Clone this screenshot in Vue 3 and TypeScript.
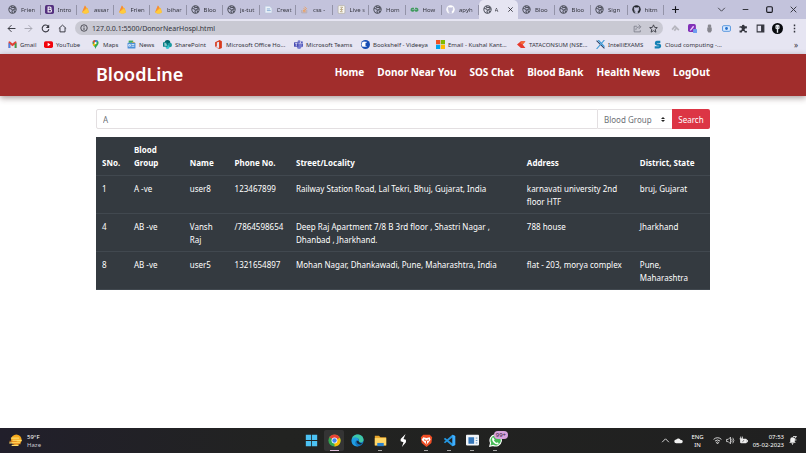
<script setup lang="ts">
import { ref } from 'vue'

interface Tab { icon: string; title: string; active?: boolean }
interface Bookmark { icon: string; label: string }
interface Donor {
  sno: number
  group: string
  name: string
  phone: string
  street: string
  address: string
  district: string
}

const tabs: Tab[] = [
  { icon: 'globe', title: 'Frien' },
  { icon: 'bootstrap', title: 'Intro' },
  { icon: 'flame', title: 'assar' },
  { icon: 'flame', title: 'Frien' },
  { icon: 'flame', title: 'bihar' },
  { icon: 'globe', title: 'Bloo' },
  { icon: 'globe', title: 'js-tut' },
  { icon: 'page', title: 'Creat' },
  { icon: 'stack', title: 'css -' },
  { icon: 'doc', title: 'Live s' },
  { icon: 'globe', title: 'Hom' },
  { icon: 'geeks', title: 'How' },
  { icon: 'github-light', title: 'apyh' },
  { icon: 'globe', title: 'A', active: true },
  { icon: 'globe', title: 'Bloo' },
  { icon: 'globe', title: 'Bloo' },
  { icon: 'globe', title: 'Sign' },
  { icon: 'github', title: 'hitm' },
]

const bookmarks: Bookmark[] = [
  { icon: 'gmail', label: 'Gmail' },
  { icon: 'youtube', label: 'YouTube' },
  { icon: 'maps', label: 'Maps' },
  { icon: 'news', label: 'News' },
  { icon: 'sharepoint', label: 'SharePoint' },
  { icon: 'office', label: 'Microsoft Office Ho...' },
  { icon: 'teams', label: 'Microsoft Teams' },
  { icon: 'bookshelf', label: 'Bookshelf - Videeya' },
  { icon: 'microsoft', label: 'Email - Kushal Kant...' },
  { icon: 'tata', label: 'TATACONSUM (NSE...' },
  { icon: 'exams', label: 'IntelliEXAMS' },
  { icon: 'cloud-s', label: 'Cloud computing -...' },
]

const extensions = ['recycle', 'purple', 'mic', 'camera', 'puzzle', 'panel', 'avatar', 'dots']
const links = ['Home', 'Donor Near You', 'SOS Chat', 'Blood Bank', 'Health News', 'LogOut']
const columns = ['SNo.', 'Blood Group', 'Name', 'Phone No.', 'Street/Locality', 'Address', 'District, State']
const apps = ['windows', 'chrome', 'edge', 'folder', 'bolt', 'brave', 'vscode', 'window-app', 'whatsapp']
const running = ['chrome', 'folder', 'brave', 'vscode', 'window-app', 'whatsapp']

const donors: Donor[] = [
  { sno: 1, group: 'A -ve', name: 'user8', phone: '123467899', street: 'Railway Station Road, Lal Tekri, Bhuj, Gujarat, India', address: 'karnavati university 2nd floor HTF', district: 'bruj, Gujarat' },
  { sno: 4, group: 'AB -ve', name: 'Vansh Raj', phone: '/7864598654', street: 'Deep Raj Apartment 7/8 B 3rd floor , Shastri Nagar , Dhanbad , Jharkhand.', address: '788 house', district: 'Jharkhand' },
  { sno: 8, group: 'AB -ve', name: 'user5', phone: '1321654897', street: 'Mohan Nagar, Dhankawadi, Pune, Maharashtra, India', address: 'flat - 203, morya complex', district: 'Pune, Maharashtra' },
]

const query = ref('A')
const url = ref('127.0.0.1:5500/DonorNearHospi.html')
const bloodGroup = ref('')
</script>

<template>
  <div class="screen">
    <svg class="sprite" aria-hidden="true">
      <symbol id="globe" viewBox="0 0 16 16"><circle cx="8" cy="8" r="6.5" fill="none" stroke="#4a4d58" stroke-width="1.8" /><path d="M2 6l4 1 2 2-1 2 1 3M7 2l-1 2 3 1 2-1 2 3-3 1 1 3 2 1" fill="none" stroke="#4a4d58" stroke-width="1.8" /></symbol>
      <symbol id="bootstrap" viewBox="0 0 16 16"><rect width="16" height="16" rx="3" fill="#53307f" /><path d="M5.5 3.5h3.2a2 2 0 0 1 0 4.2H5.500h3.600a2.300 2.300 0 0 1 0 4.800H5.500z" fill="none" stroke="#fff" stroke-width="1.8" /></symbol>
      <symbol id="flame" viewBox="0 0 16 16"><path d="M7 1l4 5 1-1 2 8c-3 3-9 3-12 0z" fill="#fbb130" /><path d="M7 1l2.500 4L2 13z" fill="#f5893b" /><path d="M2 13l9-7 3 7c-3 3-9 3-12 0z" fill="#ffcb3d" /></symbol>
      <symbol id="page" viewBox="0 0 16 16"><path d="M2 2h8l4 4v8H2z" fill="#edf3fa" stroke="#b4c6de" /><path d="M5 7h6M5 10h7" stroke="#7ba6d0" stroke-width="1.500" /></symbol>
      <symbol id="stack" viewBox="0 0 16 16"><path d="M3 9v5h9V9" fill="none" stroke="#b4aab0" stroke-width="1.500" /><path d="M5 12h5M5 9.500l5 .8M6 6.500l5 2M8 3l4 4" stroke="#ef9b52" stroke-width="1.500" /></symbol>
      <symbol id="doc" viewBox="0 0 16 16"><rect x="2" y="1" width="12" height="14" rx="2" fill="#f7f6f1" stroke="#aaa493" /><path d="M6 4h4l-4 4h4l-4 4h4" fill="none" stroke="#a9956b" stroke-width="1.400" /></symbol>
      <symbol id="geeks" viewBox="0 0 16 16"><path d="M7 6H4a2.500 2.500 0 1 0 3 3H1M9 6h3a2.500 2.500 0 1 1-3 3h6" fill="none" stroke="#3e9b5c" stroke-width="2" /></symbol>
      <symbol id="octocat" viewBox="0 0 16 16"><path d="M8 .8a7.200 7.200 0 0 0-2.300 14v-2.200c-2 .4-2.400-1-2.900-1.500 1-.1 1.500.9 2 1.100.5.100.8 0 1-.4-1.800-.3-3-1.200-3-3.500 0-.9.300-1.500.8-2.100-.2-.8-.1-1.600.2-2.200.8 0 1.500.4 2.100.8a8 8 0 0 1 4.200 0c.6-.4 1.300-.8 2.100-.8.300.6.400 1.400.2 2.200.5.600.8 1.200.8 2.100 0 2.300-1.200 3.200-3 3.500.4.500.5 1 .5 1.700v1.300A7.200 7.200 0 0 0 8 .8z" /></symbol>
      <symbol id="github" viewBox="0 0 16 16"><circle cx="8" cy="8" r="7.500" fill="#20242a" /><path d="M4 4l2 1h4l2-1v5l-2 2v4H6v-4L4 9zM3 11l3 2" fill="#c3c3dc" stroke="#c3c3dc" stroke-linejoin="round" /></symbol>
      <symbol id="github-light" viewBox="0 0 16 16"><circle cx="8" cy="8" r="7.500" fill="#fff" /><path d="M4 4l2 1h4l2-1v5l-2 2v4H6v-4L4 9zM3 11l3 2" fill="#c3c3dc" stroke="#c3c3dc" stroke-linejoin="round" /></symbol>
      <symbol id="gmail" viewBox="0 0 16 16"><path d="M1 3v11h3V8l4 3 4-3v6h3V3l-2-1-5 4-5-4z" fill="#e34236" /><path d="M1 5v9h3V7z" fill="#4385ec" /><path d="M12 7v7h3V5z" fill="#34a654" /></symbol>
      <symbol id="youtube" viewBox="0 0 16 16"><rect y="2" width="16" height="12" rx="3" fill="#f1030c" /><path d="M6.500 5l5 3-5 3z" fill="#fff" /></symbol>
      <symbol id="maps" viewBox="0 0 16 16"><path d="M8 0a5.500 5.500 0 0 0-5.500 5.500C2.500 9 7 11 8 16c1-5 5.500-7 5.500-10.500A5.500 5.500 0 0 0 8 0z" fill="#34a853" /><path d="M8 0a5.500 5.500 0 0 0-5 3l4 3z" fill="#ea4335" /><path d="M8 0l-1 5 5-3c-1-1-2-2-4-2z" fill="#4285f4" /><path d="M3 8l4-3 1 3-3 3z" fill="#fbbc04" /><circle cx="8" cy="5.500" r="2" fill="#fff" /></symbol>
      <symbol id="news" viewBox="0 0 16 16"><path d="M3 1h8v4H3z" fill="#40a95b" /><path d="M9 3l5 1-1 5H9z" fill="#e6ae34" /><rect x="1" y="5" width="14" height="10" rx="1" fill="#4d90d8" /><path d="M8 8h5M8 11h5M3 8h3v3H3z" stroke="#fff" fill="none" stroke-width="1.300" /></symbol>
      <symbol id="sharepoint" viewBox="0 0 16 16"><circle cx="8" cy="5" r="5" fill="#03666c" /><circle cx="12" cy="9" r="4" fill="#1a9ba1" /><circle cx="8" cy="12.500" r="3.500" fill="#37c6d0" /><rect y="4" width="8" height="8" rx="1" fill="#058188" /><path d="M5.800 6H3v2h3v2H2.500" fill="none" stroke="#fff" /></symbol>
      <symbol id="office" viewBox="0 0 16 16"><path d="M2 4l8-4 4 2v12l-4 2-8-3 7 1V3L5 4.500v7L2 12z" fill="#d83b1d" /></symbol>
      <symbol id="teams" viewBox="0 0 16 16"><circle cx="9" cy="3" r="2.600" fill="#7378ca" /><circle cx="14" cy="4" r="1.700" fill="#5059be" /><path d="M8 6h5v6a4 4 0 0 1-8 0z" fill="#777bd0" /><path d="M13 6h3v4a3 3 0 0 1-3 3z" fill="#5059be" /><rect y="4" width="8" height="8" rx="1" fill="#474bb4" /><path d="M2 6h4M4 6v5" stroke="#fff" stroke-width="1.200" /></symbol>
      <symbol id="bookshelf" viewBox="0 0 16 16"><circle cx="8" cy="8" r="8" fill="#174eb4" /><path d="M10 3H7a4 4 0 0 0-2 9h5z" fill="#fff" /><path d="M8 5h5v6H8z" fill="#174eb4" /><path d="M3 4a7 7 0 0 0 0 8" fill="none" stroke="#fff" /></symbol>
      <symbol id="microsoft" viewBox="0 0 16 16"><path d="M0 0h7.500v7.500H0z" fill="#f15022" /><path d="M8.500 0H16v7.500H8.500z" fill="#7fba00" /><path d="M0 8.500h7.500V16H0z" fill="#00a4ef" /><path d="M8.500 8.500H16V16H8.500z" fill="#ffb900" /></symbol>
      <symbol id="tata" viewBox="0 0 16 16"><path d="M0 8l7-6h8l-5 6 5 6H7z" fill="#e6392d" /><path d="M7 2h8l-5 6-4-2z" fill="#f36a3a" /></symbol>
      <symbol id="exams" viewBox="0 0 16 16"><path d="M1 1l14 14" stroke="#263e65" stroke-width="1.800" /><path d="M15 0L1 16M4 0l11 12" stroke="#3f9cd8" stroke-width="2" /></symbol>
      <symbol id="cloud-s" viewBox="0 0 16 16"><path d="M13 3.500H7a2.300 2.300 0 0 0 0 4.500h3a2.500 2.500 0 0 1 0 5H3" fill="none" stroke="#1482b5" stroke-width="4" /></symbol>

      <symbol id="back" viewBox="0 0 16 16"><path d="M15 8H2m6-6L2 8l6 6" fill="none" stroke="currentColor" stroke-width="1.700" /></symbol>
      <symbol id="forward" viewBox="0 0 16 16"><path d="M1 8h13M8 2l6 6-6 6" fill="none" stroke="#a5a5b0" stroke-width="1.700" /></symbol>
      <symbol id="reload" viewBox="0 0 16 16"><path d="M13 4.500A6 6 0 1 0 14 9" fill="none" stroke="currentColor" stroke-width="1.800" /><path d="M14.500 1v6h-6z" fill="currentColor" /></symbol>
      <symbol id="home" viewBox="0 0 16 16"><path d="M1.500 8L8 2l6.500 6M3.500 7v7h9V7" fill="none" stroke="currentColor" stroke-width="1.700" /></symbol>
      <symbol id="info" viewBox="0 0 16 16"><circle cx="8" cy="8" r="6.500" fill="none" stroke="currentColor" stroke-width="1.600" /><path d="M8 7v5M8 4v1.600" stroke="currentColor" stroke-width="1.700" /></symbol>
      <symbol id="share" viewBox="0 0 16 16"><path d="M7 4H2v10h11v-3M5 11c0-4 2-6 8-6M10 1l4 4-4 4" fill="none" stroke="#777985" stroke-width="1.400" /></symbol>
      <symbol id="star" viewBox="0 0 16 16"><path d="M8 1.500l2 4.500 4.800.4-3.700 3.200 1.200 4.900L8 11.900 3.700 14.500l1.200-4.900L1.200 6.400 6 6z" fill="none" stroke="currentColor" stroke-width="1.500" /></symbol>
      <symbol id="recycle" viewBox="0 0 16 16"><path d="M2 10l5-6 7 7M6 12l3-4" fill="none" stroke="#b5b5bd" stroke-width="3" /></symbol>
      <symbol id="purple" viewBox="0 0 16 16"><rect width="14" height="14" rx="3" fill="#8231b8" /><path d="M3 11l6-8 2 2-6 7z" fill="#eecbff" /><rect x="9" y="9" width="7" height="7" rx="1" fill="#6e9df0" /></symbol>
      <symbol id="mic" viewBox="0 0 16 16"><rect x="5" y="1" width="6" height="6" rx="2" fill="#898990" /><path d="M4 6h8v6l-2 3H6l-2-3z" fill="#85858d" /></symbol>
      <symbol id="camera" viewBox="0 0 16 16"><rect x="1" y="3" width="14" height="10" rx="2" fill="#d8e9ff" stroke="#428bd9" stroke-width="1.500" /><circle cx="8" cy="8" r="2.500" fill="#2671cd" /></symbol>
      <symbol id="puzzle" viewBox="0 0 16 16"><path d="M1 4h4a2.500 2.500 0 1 1 5 0h4v4a2.500 2.500 0 1 0 0 4v3h-4a2.500 2.500 0 1 0-5 0H1v-4a2.500 2.500 0 1 0 0-4z" fill="currentColor" /></symbol>
      <symbol id="panel" viewBox="0 0 16 16"><path d="M2 2h12v12H2z" fill="none" stroke="currentColor" stroke-width="1.800" /><path d="M9 2h5v12H9z" fill="currentColor" /></symbol>
      <symbol id="avatar" viewBox="0 0 16 16"><circle cx="8" cy="8" r="8" fill="#080a0e" /><path d="M5 4c1-2 5-2 6 0v4l-2 1v5H7V9L5 8z" fill="#e3e7ec" /><path d="M6 6h1m2 0h1" stroke="#111" /></symbol>
      <symbol id="dots" viewBox="0 0 16 16"><path d="M8 1v3m0 2.500v3M8 12v3" stroke="currentColor" stroke-width="2.600" /></symbol>
      <symbol id="plus" viewBox="0 0 16 16"><path d="M8 2v12M2 8h12" stroke="#15161c" stroke-width="2" /></symbol>
      <symbol id="cross" viewBox="0 0 16 16"><path d="M3 3l10 10M13 3L3 13" stroke="currentColor" stroke-width="1.700" /></symbol>
      <symbol id="down" viewBox="0 0 16 16"><path d="M2 5l6 6 6-6" fill="none" stroke="currentColor" stroke-width="1.500" /></symbol>
      <symbol id="up" viewBox="0 0 16 16"><path d="M2 11l6-6 6 6" fill="none" stroke="#e8e8e8" stroke-width="1.600" /></symbol>
      <symbol id="minimise" viewBox="0 0 16 16"><path d="M3 8h10" stroke="currentColor" stroke-width="1.800" /></symbol>
      <symbol id="maximise" viewBox="0 0 16 16"><rect x="3" y="3" width="10" height="10" rx="2" fill="none" stroke="#15161c" stroke-width="2" /></symbol>

      <symbol id="weather" viewBox="0 0 16 16"><circle cx="9" cy="7" r="6.500" fill="#f6a81c" /><path d="M3 5h9M5 8h10M1 11h12M4 14h7" stroke="#ffdc69" stroke-width="1.600" stroke-linecap="round" /><path d="M1 9h8M5 12h9" stroke="#e3821f" stroke-linecap="round" /></symbol>
      <symbol id="windows" viewBox="0 0 16 16"><path d="M1 1h6.500v6.500H1zM8.500 1H15v6.500H8.500zM1 8.500h6.500V15H1zM8.500 8.500H15V15H8.500z" fill="#4cc2f3" /></symbol>
      <symbol id="chrome" viewBox="0 0 16 16"><circle cx="8" cy="8" r="7.500" fill="#34a853" /><path d="M8 8L1.500 4.200A7.500 7.500 0 0 1 14.600 4.500z" fill="#ea4335" /><path d="M8 8l6.600-3.500A7.500 7.500 0 0 1 8 15.500z" fill="#fbbc05" /><path d="M1.500 4.200L5 10l3-2z" fill="#34a853" /><circle cx="8" cy="8" r="3.600" fill="#fff" /><circle cx="8" cy="8" r="2.700" fill="#4285f4" /></symbol>
      <symbol id="edge" viewBox="0 0 16 16"><circle cx="8" cy="8" r="7.500" fill="#1473bd" /><path d="M1 7C2-2 15-1 15.500 7c0 4-5 4-6 2 2-3-3-6-8.500-2z" fill="#3fc7a6" /><path d="M1 7c2-4 8-4 8 1-5-1-5 6 0 7C4 16 0 12 1 7z" fill="#1f9de2" /><path d="M7 8c-1 4 3 6 7 4-2-1-4-1-4.500-3z" fill="#152a3c" /></symbol>
      <symbol id="folder" viewBox="0 0 16 16"><path d="M1 2h5l2 2h7v10H1z" fill="#e7a42b" /><path d="M1 5h14v9H1z" fill="#ffd768" /><path d="M4 11h8v4H4z" fill="#2c82ce" /></symbol>
      <symbol id="bolt" viewBox="0 0 16 16"><path d="M10.500 0L4.500 6v3l3.500 1-2 6 5-6V7L8 6z" fill="#fff" /></symbol>
      <symbol id="brave" viewBox="0 0 16 16"><path d="M4 1h8l3 3-1 7-6 5-6-5-1-7z" fill="#f04e25" /><path d="M4 4l4 1 4-1 1 3-3 4-2 2-2-2-4-4z" fill="#fff" /><path d="M5 7l2 1M11 7L9 8M8 8v4" stroke="#f04e25" stroke-width="1.300" /></symbol>
      <symbol id="vscode" viewBox="0 0 16 16"><path d="M11.500 1L15 2.500v11L11.500 15 1 6l1.500-1.500L12 12V4l-9.500 7.500L1 10z" fill="#2496df" /><path d="M11.500 1L15 2.500v11L11.500 15z" fill="#3fafff" /></symbol>
      <symbol id="window-app" viewBox="0 0 16 16"><rect x="0" y="1" width="16" height="13" rx="1" fill="#f1f5f8" /><rect x="3" y="4" width="7" height="8" fill="#3476b9" /><path d="M12 5h2M12 8h2M12 11h2" stroke="#4680b6" /></symbol>
      <symbol id="whatsapp" viewBox="0 0 16 16"><path d="M1 15l1-4a7 7 0 1 1 3 3z" fill="#45bb55" stroke="#fff" stroke-width="1.400" /><path d="M5 4l2 3-1 1 3 3 1-1 2 1-1 2C7 13 3 9 4 5z" fill="#fff" /></symbol>
      <symbol id="cloud" viewBox="0 0 16 16"><path d="M4 13a3.500 3.500 0 0 1 0-7 5 5 0 0 1 8 1 3 3 0 0 1 1 6z" fill="#f0f0f0" /></symbol>
      <symbol id="wifi" viewBox="0 0 16 16"><path d="M1 6q7-6 14 0M3.500 9q4.500-4 9 0M6 11.500q2-2 4 0L8 14z" fill="none" stroke="#e7e7e7" stroke-width="1.600" /></symbol>
      <symbol id="sound" viewBox="0 0 16 16"><path d="M1 6h3l4-4v12l-4-4H1z" fill="none" stroke="#e7e7e7" stroke-width="1.400" /><path d="M10 5q2 3 0 6M12 3q4 5 0 10" fill="none" stroke="#e7e7e7" stroke-width="1.300" /></symbol>
      <symbol id="battery" viewBox="0 0 16 16"><rect x="2" y="5" width="12" height="8" rx="2" fill="#eee" /><path d="M15 7v4" stroke="#eee" stroke-width="1.600" /><path d="M3 1v6M6 1v4M1 5h6" stroke="#eee" stroke-width="1.500" /><path d="M6 11l3-4" stroke="#333" /></symbol>
      <symbol id="bell" viewBox="0 0 16 16"><path d="M2 12l2-2V6a4 4 0 0 1 8 0v4l2 2zM6 13h4l-2 3z" fill="#f1f1f1" /><path d="M9 1h6l-5 6h5" fill="none" stroke="#fff" stroke-width="1.500" /></symbol>
    </svg>

    <header class="browser">
      <div class="tab-row">
        <div class="tabs" role="tablist">
          <button v-for="(tab, i) in tabs" :key="i" type="button" role="tab" class="tab" :class="{ active: tab.active }" :aria-selected="!!tab.active">
            <svg class="icon"><use :href="'#' + tab.icon" /></svg>
            <span class="tab-title">{{ tab.title }}</span>
            <svg v-if="tab.active" class="icon close"><use href="#cross" /></svg>
          </button>
        </div>
        <button type="button" class="tool" aria-label="New tab"><svg class="icon"><use href="#plus" /></svg></button>
        <div class="window-controls">
          <button v-for="name in ['down', 'minimise', 'maximise', 'cross']" :key="name" type="button" class="tool" :aria-label="name"><svg class="icon"><use :href="'#' + name" /></svg></button>
        </div>
      </div>

      <div class="toolbar">
        <div class="tools">
          <button v-for="name in ['back', 'forward', 'reload', 'home']" :key="name" type="button" class="tool" :aria-label="name"><svg class="icon"><use :href="'#' + name" /></svg></button>
        </div>
        <div class="address-bar">
          <svg class="icon small"><use href="#info" /></svg>
          <input v-model="url" class="url" type="text" aria-label="Address" />
          <button type="button" class="tool" aria-label="Share"><svg class="icon"><use href="#share" /></svg></button>
          <button type="button" class="tool" aria-label="Bookmark"><svg class="icon"><use href="#star" /></svg></button>
        </div>
        <div class="tools">
          <button v-for="name in extensions" :key="name" type="button" class="tool" :class="name" :aria-label="name"><svg class="icon"><use :href="'#' + name" /></svg></button>
        </div>
      </div>

      <nav class="bookmarks" aria-label="Bookmarks">
        <a v-for="mark in bookmarks" :key="mark.label" href="#" class="bookmark">
          <svg class="icon"><use :href="'#' + mark.icon" /></svg>{{ mark.label }}
        </a>
        <button type="button" class="more" aria-label="More bookmarks">»</button>
      </nav>
    </header>

    <div class="site-header">
      <h1 class="brand">BloodLine</h1>
      <nav class="site-nav" aria-label="Site">
        <a v-for="link in links" :key="link" href="#" class="site-link">{{ link }}</a>
      </nav>
    </div>

    <main class="content">
      <form class="search" @submit.prevent>
        <input v-model="query" class="query" type="text" aria-label="Location" />
        <div class="select-wrap">
          <select v-model="bloodGroup" class="group" aria-label="Blood group">
            <option value="">Blood Group</option>
            <option>A -ve</option>
            <option>AB -ve</option>
          </select>
          <svg class="caret" viewBox="0 0 4 5" aria-hidden="true"><path d="M2 0L0 2h4zM2 5L0 3h4z" /></svg>
        </div>
        <button type="submit" class="submit">Search</button>
      </form>

      <table class="donors">
        <colgroup>
          <col class="c-sno" /><col class="c-group" /><col class="c-name" /><col class="c-phone" /><col class="c-street" /><col class="c-address" /><col class="c-district" />
        </colgroup>
        <thead>
          <tr><th v-for="column in columns" :key="column" scope="col">{{ column }}</th></tr>
        </thead>
        <tbody>
          <tr v-for="donor in donors" :key="donor.sno">
            <td>{{ donor.sno }}</td>
            <td>{{ donor.group }}</td>
            <td>{{ donor.name }}</td>
            <td class="phone">{{ donor.phone }}</td>
            <td>{{ donor.street }}</td>
            <td>{{ donor.address }}</td>
            <td>{{ donor.district }}</td>
          </tr>
        </tbody>
      </table>
    </main>

    <footer class="taskbar">
      <button type="button" class="weather">
        <svg class="icon app-icon"><use href="#weather" /></svg>
        <span class="stack">
          <span>59°F</span>
          <span class="dim">Haze</span>
        </span>
      </button>
      <div class="apps">
        <button v-for="app in apps" :key="app" type="button" class="app" :class="{ running: running.includes(app), current: app === 'chrome' }" :aria-label="app">
          <svg class="icon app-icon"><use :href="'#' + app" /></svg>
          <span v-if="app === 'whatsapp'" class="badge">99+</span>
        </button>
      </div>
      <div class="tray">
        <svg class="icon"><use href="#up" /></svg>
        <svg class="icon"><use href="#cloud" /></svg>
        <span class="stack language"><span>ENG</span><span>IN</span></span>
        <span class="status">
          <svg class="icon"><use href="#wifi" /></svg>
          <svg class="icon"><use href="#sound" /></svg>
          <svg class="icon"><use href="#battery" /></svg>
        </span>
        <span class="stack clock"><span>07:53</span><span>05-02-2023</span></span>
        <svg class="icon"><use href="#bell" /></svg>
      </div>
    </footer>
  </div>
</template>

<style>
body {
  background: #fff;
}
</style>

<style scoped>
* {
  box-sizing: border-box;
}

.screen {
  display: flex;
  flex-direction: column;
  min-height: 100vh;
  font-family: "Noto Sans", "Open Sans", sans-serif;
  color: #33343d;
}

button,
input,
select {
  font: inherit;
  color: inherit;
  margin: 0;
  padding: 0;
  border: 0;
  background: none;
}

a {
  color: inherit;
  text-decoration: none;
}

.sprite {
  position: absolute;
  width: 0;
  height: 0;
}

.icon {
  display: block;
  flex: none;
  width: 9px;
  height: 9px;
}

.icon.small {
  width: 8px;
  height: 8px;
}

.browser {
  background: #e6e5f2;
  font-size: 6px;
}

.tab-row {
  display: flex;
  align-items: center;
  height: 19px;
  padding: 0 8px 0 4px;
  background: #c3c3dc;
}

.tabs {
  display: flex;
  flex: 1;
  align-self: stretch;
  min-width: 0;
  margin-right: 7px;
}

.tab {
  display: flex;
  flex: 1 1 0;
  align-items: center;
  gap: 4px;
  min-width: 0;
  padding: 0 1px 0 4px;
  background: linear-gradient(#9393a8, #9393a8) right center / 1px 10px no-repeat;
}

.tab-title {
  flex: 1;
  text-align: left;
  white-space: nowrap;
  mask-image: linear-gradient(90deg, #000 60%, rgb(0 0 0 / 30%));
}

.tab.active {
  gap: 3px;
  padding-right: 4px;
  background: #e6e5f2;
  border-radius: 5px 5px 0 0;
}

.close {
  width: 7px;
  height: 7px;
  color: #15161c;
}

.tool {
  display: block;
}

.window-controls {
  display: flex;
  gap: 15px;
  margin-left: 37px;
}

.toolbar {
  display: flex;
  align-items: center;
  gap: 8px;
  height: 18px;
  padding: 0 7px;
}

.tools {
  display: flex;
  align-items: center;
  gap: 8px;
}

.avatar .icon {
  width: 11px;
  height: 11px;
  margin: 0 -1px;
}

.address-bar {
  display: flex;
  flex: 1;
  align-items: center;
  gap: 4px;
  height: 14px;
  padding: 0 5px;
  border-radius: 7px;
  background: #c9c9d3;
}

.url {
  flex: 1;
  min-width: 0;
  font-size: 7px;
}

.address-bar .tool {
  margin-left: 3px;
}

.bookmarks {
  display: grid;
  grid-template-columns: 36px 47px 36px 36px 51px 80px 67px 75px 81px 79px 57px 1fr auto;
  align-items: center;
  height: 17px;
  padding: 0 8px 2px;
}

.bookmark {
  display: flex;
  align-items: center;
  gap: 3px;
  white-space: nowrap;
}

.more {
  font-size: 8px;
}

.site-header {
  display: flex;
  justify-content: space-between;
  height: 42px;
  padding: 6px 96px 0;
  background: #a12d2c;
  box-shadow: 0 2px 6px rgb(60 30 30 / 45%);
  color: #fff;
}

.brand {
  margin: 0;
  font-size: 18px;
  font-weight: 600;
  line-height: 28px;
}

.site-nav {
  display: flex;
  gap: 13px;
  font-size: 10px;
  font-weight: 700;
  line-height: 24px;
}

.content {
  flex: 1;
  padding: 13px 96px;
  font-size: 8px;
  line-height: 13px;
}

.search {
  display: flex;
  height: 20px;
  margin-bottom: 8px;
  color: #6c7076;
}

.query {
  flex: 1;
  min-width: 0;
  padding: 0 6px;
  border: 1px solid #e3dfe1;
  border-radius: 2px 0 0 2px;
}

.select-wrap {
  position: relative;
  width: 74px;
}

.group {
  width: 100%;
  height: 100%;
  padding: 0 6px;
  border: 1px solid #e3dfe1;
  border-left: 0;
  border-right: 0;
  appearance: none;
}

.caret {
  position: absolute;
  top: 8px;
  right: 7px;
  width: 4px;
  height: 5px;
  fill: #222;
  pointer-events: none;
}

.submit {
  width: 38px;
  border-radius: 0 2px 2px 0;
  background: #dc3545;
  color: #fff;
}

.donors {
  width: 100%;
  table-layout: fixed;
  border-spacing: 0;
  background: #343a40;
  color: #fff;
}

.c-sno { width: 5.2%; }
.c-group { width: 9.1%; }
.c-name { width: 7.3%; }
.c-phone { width: 10%; }
.c-street { width: 37.6%; }
.c-address { width: 18.4%; }
.c-district { width: 12.4%; }

th,
td {
  padding: 6px 6px 5px;
  border-bottom: 1px solid #41484f;
  text-align: left;
  vertical-align: top;
}

th {
  padding-bottom: 6px;
  font-weight: 700;
  vertical-align: bottom;
}

th:first-child,
.phone {
  white-space: nowrap;
}

.taskbar {
  display: grid;
  grid-template-columns: 1fr auto 1fr;
  align-items: center;
  height: 25px;
  padding: 0 9px;
  background: linear-gradient(90deg, #211f2b, #222321 35%, #202020);
  color: #fff;
  font-size: 6px;
  line-height: 8px;
}

.stack {
  display: flex;
  flex-direction: column;
  text-align: left;
}

.weather {
  display: flex;
  align-items: center;
  justify-self: start;
  gap: 5px;
}

.dim {
  color: #c9c9cf;
}

.apps {
  display: flex;
  gap: 3px;
}

.app {
  position: relative;
  display: grid;
  place-items: center;
  width: 20px;
  height: 21px;
  border-radius: 2px;
}

.app-icon {
  width: 13px;
  height: 13px;
}

.current {
  background: #343434;
}

.running::after {
  content: "";
  position: absolute;
  bottom: 0;
  width: 4px;
  height: 1px;
  background: #a5a5a5;
}

.current::after {
  width: 9px;
  background: #e3c2de;
}

.badge {
  position: absolute;
  top: 1px;
  right: -3px;
  padding: 0 2px;
  border-radius: 4px;
  background: #d7a3dc;
  color: #39243d;
}

.tray {
  display: flex;
  align-items: center;
  justify-self: end;
  gap: 4px;
}

.language {
  margin: 0 5px 0 4px;
  text-align: center;
}

.status {
  display: flex;
  gap: 4px;
}

.clock {
  margin-left: 1px;
  text-align: right;
}
</style>
